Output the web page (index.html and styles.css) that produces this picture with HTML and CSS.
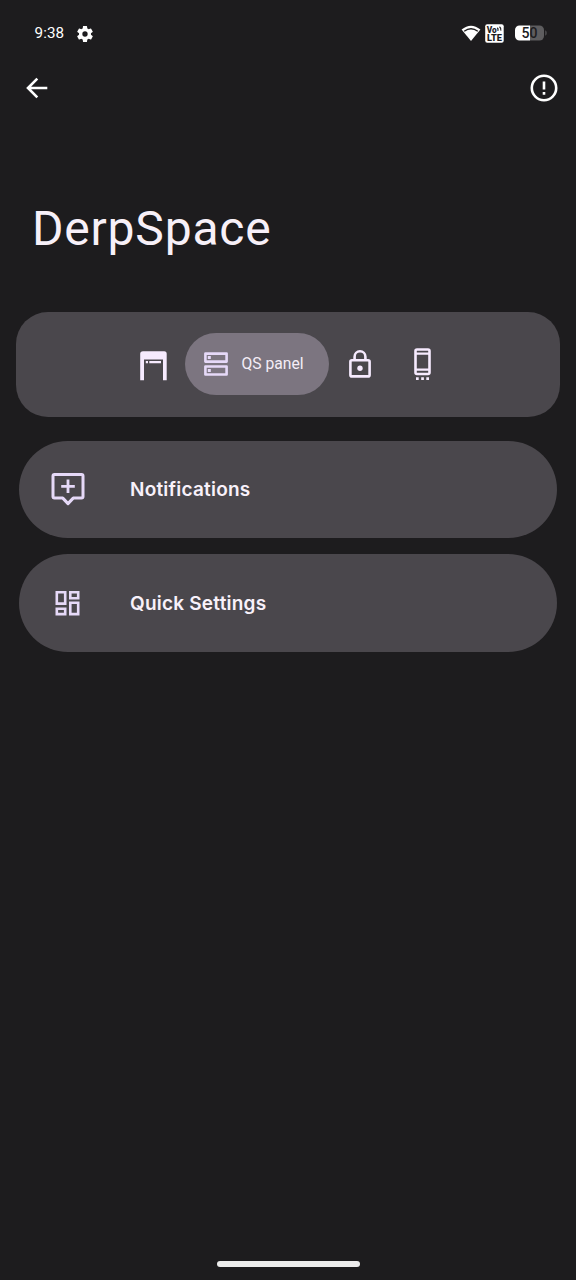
FILE: index.html
```html
<!DOCTYPE html>
<html lang="en">
<head>
<meta charset="utf-8">
<title>DerpSpace</title>
<link rel="stylesheet" href="styles.css">
</head>
<body>
<div class="screen">
  <div class="status">
    <span class="clock">9:38</span>
    <svg class="gear" width="20" height="20" viewBox="0 0 24 24"><path fill="currentColor" d="M19.14 12.94c.04-.3.06-.61.06-.94 0-.32-.02-.64-.07-.94l2.03-1.58a.49.49 0 0 0 .12-.61l-1.92-3.32a.488.488 0 0 0-.59-.22l-2.39.96c-.5-.38-1.03-.7-1.62-.94l-.36-2.54a.484.484 0 0 0-.48-.41h-3.84c-.24 0-.43.17-.47.41l-.36 2.54c-.59.24-1.13.57-1.62.94l-2.39-.96c-.22-.08-.47 0-.59.22L2.74 8.870c-.12.21-.08.47.12.61l2.030 1.580c-.05.3-.09.63-.09.94s.02.64.07.94l-2.030 1.580a.49.49 0 0 0-.12.61l1.920 3.320c.12.22.37.29.59.22l2.390-.96c.5.38 1.030.7 1.620.94l.36 2.540c.05.24.24.41.48.41h3.840c.24 0 .44-.17.47-.41l.36-2.540c.59-.24 1.130-.56 1.620-.94l2.390.96c.22.08.47 0 .59-.22l1.920-3.320c.12-.22.07-.47-.12-.61l-2.010-1.580zM12 15.200A3.200 3.200 0 1 1 12 8.800a3.200 3.200 0 0 1 0 6.400z"/></svg>
    <svg class="wifi" width="20" height="17" viewBox="0 0 20 17"><path fill="currentColor" d="M.6 4.500Q10-3.200 19.400 4.500L10 16z"/><path fill="none" stroke="#1d1c1e" stroke-width="1.400" d="M3.200 6.300Q10 1.200 16.800 6.300"/></svg>
    <svg class="volte" width="19" height="19" viewBox="0 0 19 19"><rect width="18.500" height="18.500" x=".2" y=".2" rx="2" fill="currentColor"/><text class="badge" x="1.800" y="8.700" textLength="10" lengthAdjust="spacingAndGlyphs">Vo</text><path fill="none" stroke="#1d1c1e" stroke-width="1.200" d="M12.300 3.800q1.200 1 .6 3M14.500 2.700q2 1.500 1.300 4"/><text class="badge" x="2" y="17" textLength="15" lengthAdjust="spacingAndGlyphs">LTE</text></svg>
    <svg class="battery" width="32" height="16" viewBox="0 0 32 16"><path fill="#5e5d5f" d="M15 .5h9.500a4.500 4.500 0 0 1 4.500 4.500v6a4.500 4.500 0 0 1-4.500 4.500H15z"/><path fill="#454446" d="M30 5.300q2 .6 2 2.700t-2 2.700z"/><path fill="currentColor" d="M4.500.5H15v15H4.500A4.500 4.500 0 0 1 0 11V5A4.500 4.500 0 0 1 4.500.5z"/><text class="level" x="6.500" y="13" textLength="16" lengthAdjust="spacingAndGlyphs">50</text></svg>
  </div>
  <header class="bar">
    <svg width="22" height="22" viewBox="0 0 22 22"><path class="line" d="M21.300 11H2M11.300 1.600L2 11l9.300 9.400"/></svg>
    <svg width="28" height="28" viewBox="0 0 28 28"><circle class="line" cx="14" cy="14" r="12.200"/><path class="line" d="M14 7.500v8M14 18v2.700"/></svg>
  </header>
  <h1 class="title">DerpSpace</h1>
  <nav class="tabs">
    <svg class="tab-status" width="28" height="30" viewBox="0 0 28 30"><path fill="currentColor" fill-rule="evenodd" d="M3 .2h21.200q2.500 0 2.500 2.500v26.600h-3.700V8.500H4v20.800H.2V2.700Q.2.200 3 .2z"/><path fill="currentColor" d="M5.800 10h2.200v2.200H5.800zM9.300 10H21v2.200H9.300z"/></svg>
    <div class="active">
      <svg width="24" height="24" viewBox="0 0 24 24"><path fill="none" stroke="currentColor" stroke-width="2.600" stroke-linejoin="round" d="M1.400 1.600h21.200v8H1.400zM1.400 14.500h21.200v8H1.400z"/><path fill="currentColor" d="M3.800 4h3v3h-3zM3.800 17h3v3h-3z"/></svg>
      <span class="active-text">QS panel</span>
    </div>
    <svg class="tab-lock" width="22" height="28" viewBox="0 0 22 28"><rect class="thin" x="1.400" y="10.200" width="19.200" height="16.200" rx="1.500"/><path class="thin" d="M5.600 10V6.700a5.400 5.400 0 0 1 10.800 0V10"/><circle cx="11" cy="18.300" r="2.700" fill="currentColor"/></svg>
    <svg class="tab-phone" width="17" height="33" viewBox="0 0 17 33"><rect class="thin" x="1.500" y="1.500" width="14" height="24.500" rx="1.500"/><path fill="none" stroke="currentColor" stroke-width="2.400" d="M2 5.600h13M2 21.600h13"/><path fill="currentColor" d="M2 29.300h2.700V32H2zM7.200 29.300h2.700V32H7.200zM12.300 29.300H15V32h-2.700z"/></svg>
  </nav>
  <main class="list">
    <section class="card">
      <svg width="34" height="34" viewBox="0 0 34 34"><path fill="none" stroke="currentColor" stroke-width="3" stroke-linejoin="round" d="M3.500 2.400h27q1.500 0 1.500 1.500v20.700q0 1.500-1.500 1.500h-8.300l-5.200 5.500-5.200-5.500H3.500Q2 26.100 2 24.600V3.900q0-1.500 1.500-1.500z"/><path fill="none" stroke="currentColor" stroke-width="2.800" d="M17 7.500v13.600M10.200 14.300h13.600"/></svg>
      <span class="label">Notifications</span>
    </section>
    <section class="card">
      <svg width="34" height="34" viewBox="0 0 34 34"><path fill="none" stroke="currentColor" stroke-width="2.600" d="M5.800 6.300h8.400v11.300H5.800zM19.300 6.300h7.900v5.900h-7.900zM5.800 22.700h8.400v5.400H5.800zM19.300 16.800h7.900v11.300h-7.900z"/></svg>
      <span class="label">Quick Settings</span>
    </section>
  </main>
  <div class="home"></div>
</div>
</body>
</html>
```

FILE: styles.css
```css
* { box-sizing: border-box; }
body { margin: 0; background: #1d1c1e; color: #f7f0f8; font-family: Roboto, "Liberation Sans", sans-serif; }
svg { display: block; flex: none; }
.screen { height: 1280px; display: flex; flex-direction: column; }
.status { height: 66px; padding: 0 29px 0 34.500px; display: flex; align-items: center; color: #fff; }
.clock { font: 400 15.200px/20px Roboto, sans-serif; letter-spacing: .1px; width: 40px; }
.gear { margin-top: 1px; }
.wifi { margin-left: auto; }
.volte { margin: 1px 11px 0 4px; }
.badge { font: 900 8.500px Roboto, sans-serif; fill: #1d1c1e; }
.level { font: 500 14px Roboto, sans-serif; fill: #1d1c1e; }
.bar { height: 44px; padding: 0 18px 0 26px; display: flex; align-items: center; justify-content: space-between; color: #fff; }
.line { fill: none; stroke: currentColor; stroke-width: 2.600; }
.thin { fill: none; stroke: currentColor; stroke-width: 2.600; }
.title { margin: 91px 0 0 32px; height: 56px; font-size: 48px; line-height: 55px; font-weight: 400; letter-spacing: .8px; white-space: nowrap; }
.tabs { height: 105px; margin: 54.500px 16px 0; padding-left: 123.500px; display: flex; align-items: center; border-radius: 32px; background: #4a474c; color: #f6eafe; }
.tab-status { margin-top: 3px; }
.active { width: 144.500px; height: 62px; margin-left: 17px; padding-left: 19.500px; display: flex; align-items: center; border-radius: 31px; background: #7c7580; color: #e6d9f8; }
.active-text { margin-left: 13.500px; font-size: 15.700px; line-height: 20px; color: #f4edf7; white-space: nowrap; }
.tab-lock { margin-left: 20px; }
.tab-phone { margin-left: 43px; }
.list { margin: 24px 19px 0; display: flex; flex-direction: column; gap: 16px; }
.card { height: 97.500px; padding-left: 32px; display: flex; align-items: center; gap: 45px; border-radius: 49px; background: #4a474c; color: #e6d9f8; }
.label { font: 600 19px/24px Inter, sans-serif; letter-spacing: .22px; padding-top: 1.500px; color: #f8f1fa; white-space: nowrap; }
.home { width: 143px; height: 6px; margin: auto auto 13px; border-radius: 3px; background: #ececec; }
```
